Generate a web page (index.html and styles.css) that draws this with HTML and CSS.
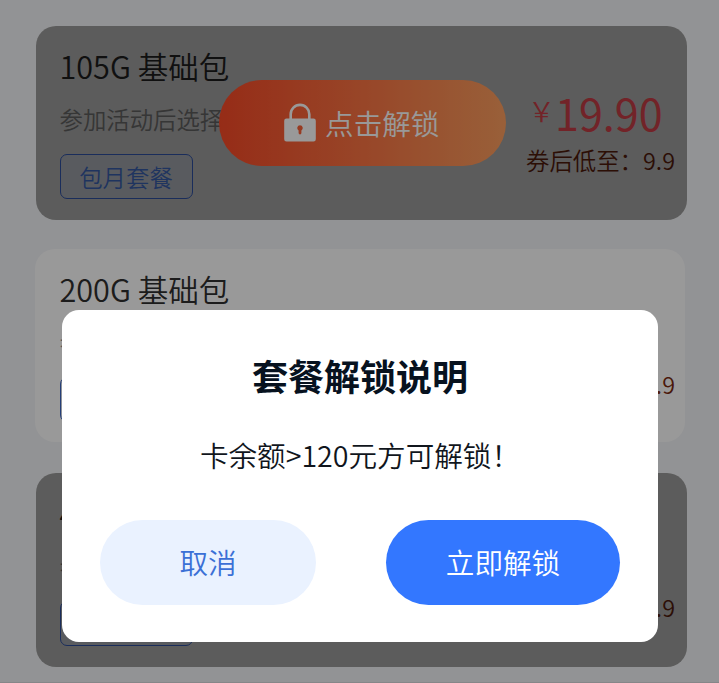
FILE: index.html
```html
<!DOCTYPE html>
<html lang="zh-CN">
<head>
<meta charset="utf-8">
<title>套餐解锁说明</title>
<link rel="stylesheet" href="styles.css">
</head>
<body>
<main class="list">
  <section class="card locked">
    <div class="info">
      <h2 class="name">105G 基础包</h2>
      <p class="desc">参加活动后选择</p>
      <span class="tag">包月套餐</span>
    </div>
    <div class="cost">
      <div class="price"><span class="yen">￥</span>19.90</div>
      <div class="coupon">券后低至：9.9</div>
    </div>
    <div class="mask"></div>
    <button class="unlock">
      <svg class="lock" viewBox="0 0 32 40" width="32" height="40">
        <path d="M6.700 17V11.200a9.300 9.300 0 0 1 18.600 0V17" fill="none" stroke="currentColor" stroke-width="2.600"/>
        <path fill="currentColor" fill-rule="evenodd" d="M2.500 15.500h27a2.300 2.300 0 0 1 2.300 2.300v18.400a2.300 2.300 0 0 1-2.300 2.300h-27a2.300 2.300 0 0 1-2.300-2.300V17.800a2.300 2.300 0 0 1 2.300-2.300zM16 22.300a2.800 2.800 0 0 0-1.400 5.200v2.500a1.400 1.400 0 0 0 2.800 0v-2.500a2.800 2.800 0 0 0-1.400-5.200z"/>
      </svg>
      <span>点击解锁</span>
    </button>
  </section>
  <section class="card open">
    <div class="info">
      <h2 class="name">200G 基础包</h2>
      <p class="desc">参加活动后选择</p>
      <span class="tag">包月套餐</span>
    </div>
    <div class="cost">
      <div class="coupon">券后低至：9.9</div>
    </div>
  </section>
  <section class="card locked">
    <div class="info">
      <h2 class="name">400G 基础包</h2>
      <p class="desc">参加活动后选择</p>
      <span class="tag">包月套餐</span>
    </div>
    <div class="cost">
      <div class="coupon">券后低至：9.9</div>
    </div>
    <div class="mask"></div>
  </section>
</main>
<div class="overlay">
  <div class="dialog" role="dialog">
    <h1 class="dialog-title">套餐解锁说明</h1>
    <p class="dialog-text">卡余额&gt;120元方可解锁！</p>
    <div class="actions">
      <button class="btn cancel">取消</button>
      <button class="btn confirm">立即解锁</button>
    </div>
  </div>
</div>
</body>
</html>
```
FILE: styles.css
```css
* { box-sizing: border-box; margin: 0; padding: 0; }
body {
  height: 683px;
  overflow: hidden;
  background: #f4f6f9;
  font-family: "Noto Sans CJK SC", sans-serif;
  font-weight: 350;
}
button { border: 0; font-family: inherit; font-weight: inherit; }
.list {
  height: 683px;
  padding: 25.500px 32px 0 36px;
  display: flex;
  flex-direction: column;
  gap: 29px;
  border-bottom: 1px solid #dfe0e3;
}
.card {
  position: relative;
  flex: none;
  height: 194.500px;
  padding: 20px 12px 0 23.500px;
  display: flex;
  justify-content: space-between;
  background: #fff;
  border-radius: 20px;
  overflow: hidden;
}
.card.open {
  height: 193px;
  margin: 0 2px 1.500px -1px;
  padding-left: 24.500px;
  padding-right: 10px;
}
.mask {
  position: absolute;
  inset: 0;
  background: rgba(0, 0, 0, .4);
}
.name { font-size: 30.600px; line-height: 40px; font-weight: inherit; color: #303030; }
.desc { margin-top: 18px; font-size: 23.400px; line-height: 31px; color: #969696; }
.tag {
  display: block;
  width: 133px;
  height: 45px;
  margin-top: 19px;
  border: 1.500px solid #3e69c8;
  border-radius: 7px;
  background: #f0f5ff;
  color: #4676e0;
  font-size: 23.400px;
  line-height: 44px;
  text-align: center;
}
.locked .tag {
  position: relative;
  z-index: 1;
  border-color: #2c4c98;
  background: #95989f;
  color: #35589f;
}
.cost {
  display: flex;
  flex-direction: column;
  justify-content: flex-end;
  height: 131.500px;
  text-align: right;
  color: #7c2a10;
}
.price {
  position: relative;
  z-index: 1;
  display: flex;
  justify-content: flex-end;
  margin-bottom: 2px;
  padding-right: 12.500px;
  font-size: 43px;
  line-height: 60px;
  font-weight: 400;
  color: #bf3b43;
}
.yen { font-size: 27px; line-height: 57px; font-weight: 350; }
.coupon { font-size: 23.400px; line-height: 33px; }
.unlock {
  position: absolute;
  z-index: 2;
  left: 183px;
  top: 54px;
  width: 287px;
  height: 86px;
  padding: 0 2px 0 0;
  border-radius: 43px;
  background: linear-gradient(90deg, #fb4a27, #ffa060);
  color: #fff;
  display: flex;
  align-items: center;
  justify-content: center;
  gap: 9.500px;
  font-size: 28.600px;
}
.overlay {
  position: fixed;
  z-index: 10;
  inset: 0;
  padding: 310px 61px 0 62px;
  background: rgba(0, 0, 0, .4);
}
.dialog {
  height: 332px;
  padding: 40px 38px 0;
  border-radius: 17px;
  background: #fff;
  text-align: center;
}
.dialog-title { font-size: 36px; line-height: 50px; font-weight: 700; color: #07121f; }
.dialog-text { margin-top: 35px; font-size: 28.600px; line-height: 40px; color: #10151c; }
.actions { margin-top: 44.500px; display: flex; justify-content: space-between; }
.btn { height: 85px; padding-bottom: 2px; border-radius: 43px; font-size: 28.600px; }
.cancel { width: 216px; background: #eaf2ff; color: #3b70d6; }
.confirm { width: 234px; background: #3377ff; color: #fff; }
```
